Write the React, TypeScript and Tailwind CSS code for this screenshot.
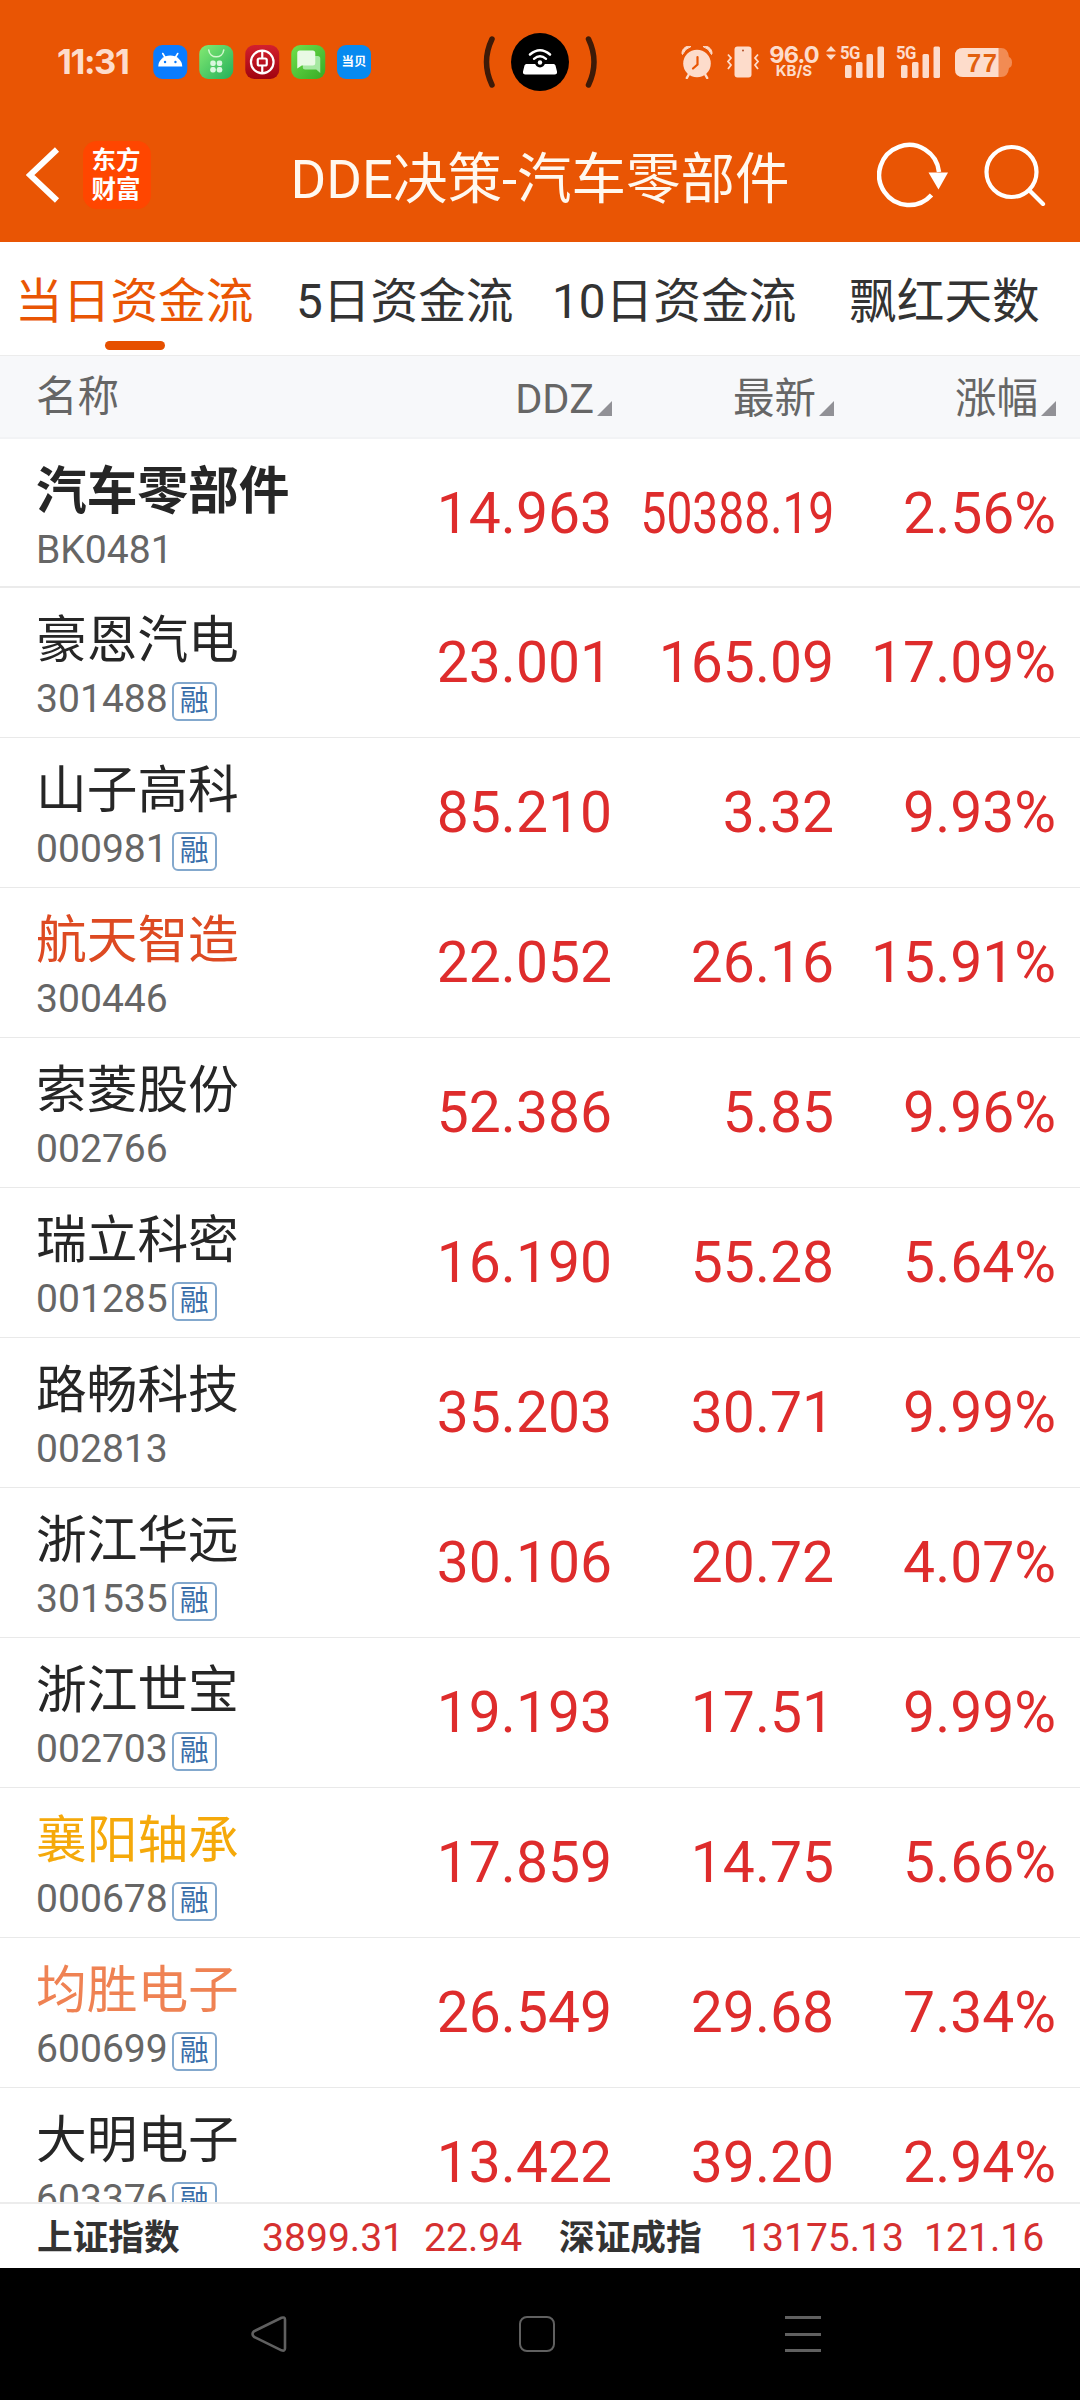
interface Stock {
  name: string;
  code: string;
  ddz: string;
  price: string;
  change: string;
  margin?: boolean;
  nameClass?: string;
}

const stocks: Stock[] = [
  { name: '豪恩汽电', code: '301488', ddz: '23.001', price: '165.09', change: '17.09%', margin: true },
  { name: '山子高科', code: '000981', ddz: '85.210', price: '3.32', change: '9.93%', margin: true },
  { name: '航天智造', code: '300446', ddz: '22.052', price: '26.16', change: '15.91%', nameClass: 'text-[#dd4a22]' },
  { name: '索菱股份', code: '002766', ddz: '52.386', price: '5.85', change: '9.96%' },
  { name: '瑞立科密', code: '001285', ddz: '16.190', price: '55.28', change: '5.64%', margin: true },
  { name: '路畅科技', code: '002813', ddz: '35.203', price: '30.71', change: '9.99%' },
  { name: '浙江华远', code: '301535', ddz: '30.106', price: '20.72', change: '4.07%', margin: true },
  { name: '浙江世宝', code: '002703', ddz: '19.193', price: '17.51', change: '9.99%', margin: true },
  { name: '襄阳轴承', code: '000678', ddz: '17.859', price: '14.75', change: '5.66%', margin: true, nameClass: 'text-[#f5a90a]' },
  { name: '均胜电子', code: '600699', ddz: '26.549', price: '29.68', change: '7.34%', margin: true, nameClass: 'text-[#ef8253]' },
  { name: '大明电子', code: '603376', ddz: '13.422', price: '39.20', change: '2.94%', margin: true },
];

function AppIcons() {
  return (
    <div className="flex gap-[11.5px]">
      <svg width="34.5" height="34" viewBox="0 0 34 34">
        <rect width="34" height="34" rx="9" fill="#0a7cff" />
        <path d="M5 21.500a12 11 0 0 1 24 0z" fill="#fff" />
        <path d="M9.500 8.500l3 5M24.500 8.500l-3 5" stroke="#fff" strokeWidth="1.600" strokeLinecap="round" />
        <circle cx="11.800" cy="17" r="1.200" fill="#0a7cff" />
        <circle cx="22.200" cy="17" r="1.200" fill="#0a7cff" />
      </svg>
      <svg width="34.5" height="34" viewBox="0 0 34 34">
        <defs>
          <linearGradient id="market" x1="0" y1="0" x2="1" y2="1">
            <stop offset="0" stopColor="#84ea72" />
            <stop offset="1" stopColor="#22b05a" />
          </linearGradient>
        </defs>
        <rect width="34" height="34" rx="9" fill="url(#market)" />
        <path d="M9.500 5c1 9 14 9 15 0" stroke="#d3f8ce" strokeWidth="1.600" fill="none" strokeLinecap="round" />
        <g fill="#d9f7df">
          <rect x="11" y="15.500" width="5.500" height="5.500" rx="2.200" />
          <rect x="17.500" y="15.500" width="5.500" height="5.500" rx="2.200" />
          <rect x="11" y="22" width="5.500" height="5.500" rx="2.200" />
          <rect x="17.500" y="22" width="5.500" height="5.500" rx="2.200" />
        </g>
      </svg>
      <svg width="34.5" height="34" viewBox="0 0 34 34">
        <defs>
          <linearGradient id="bank" x1="0" y1="0" x2="0" y2="1">
            <stop offset="0" stopColor="#d3202e" />
            <stop offset="1" stopColor="#a00410" />
          </linearGradient>
        </defs>
        <rect width="34" height="34" rx="9" fill="url(#bank)" />
        <circle cx="17" cy="17" r="11.300" stroke="#fff" strokeWidth="2.200" fill="none" />
        <rect x="12.500" y="13.500" width="9" height="7" rx="1.500" stroke="#fff" strokeWidth="2.200" fill="none" />
        <path d="M17 5v8M17 21v8" stroke="#fff" strokeWidth="2.200" />
      </svg>
      <svg width="34.5" height="34" viewBox="0 0 34 34">
        <defs>
          <linearGradient id="sms" x1="0" y1="0" x2="1" y2="1">
            <stop offset="0" stopColor="#70e04c" />
            <stop offset="1" stopColor="#36ab25" />
          </linearGradient>
        </defs>
        <rect width="34" height="34" rx="9" fill="url(#sms)" />
        <path d="M14 11h12.500a2.500 2.500 0 0 1 2.500 2.500v14.500l-4-3.500h-11a2.500 2.500 0 0 1-2.500-2.500z" fill="#a5e8a1" />
        <path d="M8.500 5.500h13a2.500 2.500 0 0 1 2.500 2.500v10a2.500 2.500 0 0 1-2.500 2.500h-11l-4.500 3v-15.500a2.500 2.500 0 0 1 2.500-2.500z" fill="#e9fae5" />
      </svg>
      <div className="flex h-[34px] w-[34px] items-center justify-center rounded-[9px] bg-[#078af0] text-[12.5px] font-bold leading-none text-white">
        当贝
      </div>
    </div>
  );
}

function Hotspot() {
  return (
    <svg width="114" height="60" viewBox="483 32 114 60">
      <g fill="none" stroke="#3d1a08" strokeWidth="5.500" strokeLinecap="round">
        <path d="M492 39q-11 23 0 46" />
        <path d="M588.500 39q11 23 0 46" />
      </g>
      <circle cx="540" cy="62" r="29" fill="#000" />
      <path d="M526.500 64h27a2 2 0 0 1 2 1.500l1.500 6q.500 3-2.500 3h-29q-3 0-2.500-3l1.500-6a2 2 0 0 1 2-1.500z" fill="#fff" />
      <circle cx="540" cy="62.500" r="5" fill="#000" />
      <circle cx="540" cy="62.500" r="2.200" fill="#fff" />
      <path d="M530 54.500q10-8.500 20 0" fill="none" stroke="#fff" strokeWidth="2.600" strokeLinecap="round" />
      <path d="M534 58.800q6-5 12 0" fill="none" stroke="#fff" strokeWidth="2.400" strokeLinecap="round" />
    </svg>
  );
}

function Signal() {
  return (
    <div className="relative h-[32px] w-[45px]">
      <span className="absolute left-0 top-0 origin-left scale-x-[0.9] text-[18.5px] font-bold leading-[14px] tracking-[-0.5px]">5G</span>
      <svg width="45" height="32" viewBox="0 0 45 32" fill="currentColor">
        <rect x="5" y="19" width="6.500" height="13" rx="1.500" />
        <rect x="16" y="16" width="6.500" height="16" rx="1.500" />
        <rect x="26.500" y="8" width="6.500" height="24" rx="1.500" />
        <rect x="37.500" y="0.500" width="6.500" height="31.500" rx="1.500" />
      </svg>
    </div>
  );
}

function StatusBar() {
  return (
    <div className="flex h-[124px] items-center text-[#fddccb]">
      <div className="flex w-[483px] items-center pl-[57px]">
        <span className="w-[96px] font-['Inter'] text-[34.5px] font-bold leading-none tracking-[-1.4px]">11:31</span>
        <AppIcons />
      </div>
      <Hotspot />
      <div className="flex items-center pl-[84px]">
        <svg width="32" height="33" viewBox="0 0 32 33" fill="currentColor">
          <circle cx="16" cy="17.500" r="13.800" />
          <path d="M1 7.500a7 7 0 0 1 9-7q-6 2-8.500 8zM31 7.500a7 7 0 0 0-9-7q6 2 8.500 8z" stroke="currentColor" strokeLinejoin="round" />
          <path d="M7.500 29l-1.700 3M24.500 29l1.700 3" stroke="currentColor" strokeWidth="2.500" strokeLinecap="round" />
          <path d="M16.500 11v7.500l-4.500 4" fill="none" stroke="#e95504" strokeWidth="2.200" strokeLinecap="round" />
        </svg>
        <svg className="ml-[14px]" width="32" height="32" viewBox="0 0 32 32">
          <rect x="7.500" y="0.500" width="17" height="31" rx="3" fill="currentColor" />
          <circle cx="16" cy="4.500" r="1" fill="#b25129" />
          <path d="M1 8.500l3 3.500-3 3.500 3 3.500-3 4M31 8.500l-3 3.500 3 3.500-3 3.500 3 4" fill="none" stroke="currentColor" strokeWidth="1.800" />
        </svg>
        <div className="ml-[9px] flex w-[52px] flex-col items-center font-['Inter'] font-bold">
          <span className="text-[23.5px] leading-[18px] tracking-[-0.8px]">96.0</span>
          <span className="text-[15px] leading-[14px]">KB/S</span>
        </div>
        <svg className="mb-[18px] ml-[6px] mr-[4px]" width="10" height="14" viewBox="0 0 10 14" fill="currentColor">
          <path d="M5 0l5 5.500h-10zM5 14l5-5.500h-10z" />
        </svg>
        <Signal />
        <div className="w-[11px]" />
        <Signal />
        <svg className="ml-[14px]" width="57" height="29" viewBox="0 0 57 29">
          <path d="M8 0h38q7 0 8 9q3 1 3 5.500t-3 5.500q-1 9-8 9h-38q-8 0-8-8v-13q0-8 8-8z" fill="#f28b53" />
          <path d="M8 0h35.500v29h-35.500q-8 0-8-8v-13q0-8 8-8z" fill="#fddccb" />
          <text x="12" y="24" fontSize="25.500" fontWeight="700" fontFamily="Liberation Sans" fontStyle="normal" textLength="30" fill="#e2600f">77</text>
        </svg>
      </div>
    </div>
  );
}

function TitleBar() {
  return (
    <div className="flex h-[118px] items-center pb-[16px] text-[#fff8ef]">
      <div className="flex w-[270px] items-center pl-[26px]">
        <svg width="34" height="56" viewBox="0 0 34 56" fill="none" stroke="#fff" strokeWidth="6">
          <path d="M31 2.500l-27 25.500l27 25.500" />
        </svg>
        <div className="ml-[23px] flex h-[68px] w-[68px] flex-col items-center justify-center rounded-[14px] bg-[#ff4600] pr-[2px] text-[24.5px] font-bold leading-[29px] text-white">
          <span>东方</span>
          <span>财富</span>
        </div>
      </div>
      <h1 className="flex-1 whitespace-nowrap pt-[7px] text-center text-[54.5px] leading-[60px]">DDE决策-汽车零部件</h1>
      <div className="flex w-[270px] items-center pl-[67px]">
        <svg width="72" height="66" viewBox="0 0 72 66">
          <path d="M54.500 53a30 30 0 1 1 7.500-23" fill="none" stroke="#fff" strokeWidth="4.500" />
          <path d="M51.500 30.500h19.500l-9.500 17z" fill="#fff" />
        </svg>
        <svg className="ml-[35px]" width="62" height="62" viewBox="0 0 62 62" fill="none" stroke="#fff" strokeWidth="4.200">
          <circle cx="27.500" cy="28" r="25" />
          <path d="M45.500 46.500l13.500 13.500" strokeLinecap="round" />
        </svg>
      </div>
    </div>
  );
}

function Tabs() {
  return (
    <div className="flex h-[114px] whitespace-nowrap border-b border-[#ececec] pl-[15px] pt-[30px] text-[47.7px] leading-[60px] text-[#333]">
      <div className="flex w-[281px] flex-col text-[#e95504]">
        当日资金流
        <div className="ml-[90px] mt-[9px] h-[9px] w-[60px] rounded-full bg-[#e65000]" />
      </div>
      <div className="w-[256px]">5日资金流</div>
      <div className="w-[297px]">10日资金流</div>
      <div>飘红天数</div>
    </div>
  );
}

function SortHeader({ label }: { label: string }) {
  return (
    <div className="flex w-[222px] items-end justify-end">
      <span className="pt-[5px]">{label}</span>
      <svg className="mb-[8px] ml-[3px]" width="15" height="15" viewBox="0 0 15 15">
        <path d="M15 0v15h-15z" fill="#919196" />
      </svg>
    </div>
  );
}

function Quote({ value, narrow }: { value: string; narrow?: boolean }) {
  return (
    <div className="flex w-[222px] justify-end text-[57px] leading-[60px] text-[#de2c2c]">
      <span className={narrow ? 'origin-right scale-x-[0.81]' : ''}>{value}</span>
    </div>
  );
}

function StockRow({ stock }: { stock: Stock }) {
  return (
    <div className="flex h-[150px] shrink-0 border-b border-[#e9e9e9] pl-[36px]">
      <div className="flex w-[354px] flex-col pt-[23px]">
        <div className={`text-[50.7px] leading-[60px] ${stock.nameClass ?? 'text-[#262626]'}`}>{stock.name}</div>
        <div className="flex h-[56px] items-center text-[39.1px] leading-[56px] text-[#666]">
          {stock.code}
          {stock.margin && (
            <span className="ml-[4px] mt-[4px] flex h-[39px] w-[45px] items-center justify-center rounded-[6px] border-2 border-[#83a8cd] text-[29px] leading-none text-[#3a6ea9]">
              融
            </span>
          )}
        </div>
      </div>
      <div className="flex pt-[45px]">
        <Quote value={stock.ddz} />
        <Quote value={stock.price} />
        <Quote value={stock.change} />
      </div>
    </div>
  );
}

export default function App() {
  return (
    <div className="flex h-[2400px] w-[1080px] flex-col overflow-hidden bg-white font-['Roboto','Noto_Sans_CJK_SC',sans-serif]">
      <header className="bg-[#e95504]">
        <StatusBar />
        <TitleBar />
      </header>
      <Tabs />
      <div className="flex h-[83px] items-center border-b-2 border-[#f2f3f5] bg-[#f7f8fa] pl-[36px] text-[41.5px] leading-[50px] text-[#666]">
        <div className="w-[354px] pt-px">名称</div>
        <SortHeader label="DDZ" />
        <SortHeader label="最新" />
        <SortHeader label="涨幅" />
      </div>
      <main className="flex min-h-0 flex-1 flex-col overflow-hidden">
        <div className="flex h-[149px] shrink-0 border-b-2 border-[#ebebeb] pl-[36px]">
          <div className="w-[354px] pt-[23px]">
            <div className="text-[50.7px] font-bold leading-[60px] text-[#262626]">汽车零部件</div>
            <div className="text-[39.1px] leading-[56px] text-[#666]">BK0481</div>
          </div>
          <div className="flex pt-[45px]">
            <Quote value="14.963" />
            <Quote value="50388.19" narrow />
            <Quote value="2.56%" />
          </div>
        </div>
        {stocks.map((stock) => (
          <StockRow key={stock.code} stock={stock} />
        ))}
      </main>
      <footer className="flex h-[66px] items-center whitespace-nowrap border-t-2 border-[#ececec] pl-[37px] pt-[5px] text-[39.1px] text-[#d53030]">
        <span className="w-[225px] text-[35.7px] font-bold text-[#333]">上证指数</span>
        <span className="w-[162px]">3899.31</span>
        <span className="w-[135px]">22.94</span>
        <span className="w-[181px] text-[35.7px] font-bold text-[#333]">深证成指</span>
        <span className="w-[184px]">13175.13</span>
        <span>121.16</span>
      </footer>
      <nav className="flex h-[132px] items-center bg-black">
        <svg className="ml-[251px]" width="36" height="36" viewBox="0 0 36 36" fill="none" stroke="#606060" strokeWidth="2.600">
          <path d="M30.500 1.800q3.500-1.300 3.500 2v28.500q0 3.300-3.500 2l-27.500-13.500q-3-2.800 0-5.500z" />
        </svg>
        <div className="ml-[232px] h-[36px] w-[36px] rounded-[8px] border-[2.5px] border-[#606060]" />
        <div className="ml-[230px] flex h-[36px] w-[36px] flex-col justify-between">
          <div className="h-[3px] bg-[#606060]" />
          <div className="h-[3px] bg-[#606060]" />
          <div className="h-[3px] bg-[#606060]" />
        </div>
      </nav>
    </div>
  );
}
